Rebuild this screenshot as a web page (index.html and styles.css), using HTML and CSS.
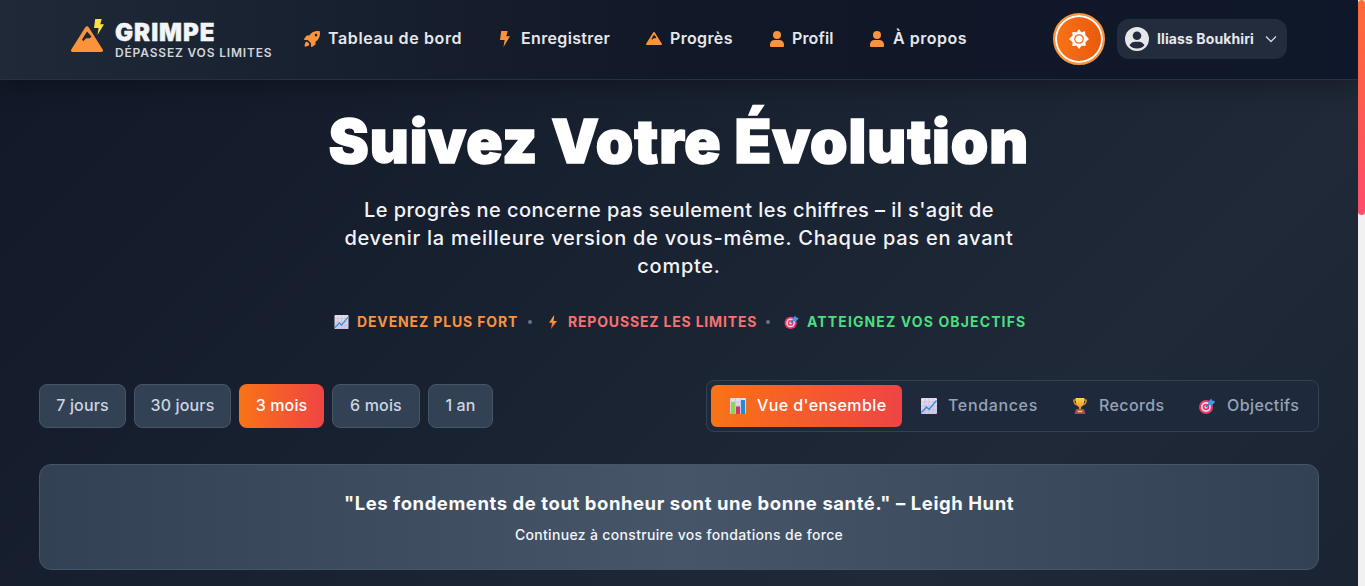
FILE: index.html
```html
<!DOCTYPE html>
<html lang="fr">
<head>
<meta charset="utf-8">
<title>Grimpe – Progrès</title>
<link rel="stylesheet" href="styles.css">
</head>
<body>
<svg class="defs" aria-hidden="true">
  <linearGradient id="gold" x2="0" y2="1"><stop offset="0" stop-color="#ffd34d"/><stop offset="1" stop-color="#f28a1c"/></linearGradient>
  <linearGradient id="flash" x2="0" y2="1"><stop offset="0" stop-color="#ffc93c"/><stop offset="1" stop-color="#f4502e"/></linearGradient>
  <linearGradient id="paper" x2="0" y2="1"><stop offset="0" stop-color="#e6e0ee"/><stop offset="1" stop-color="#d3c5e3"/></linearGradient>
  <symbol id="mountain" viewBox="0 0 32 26"><path fill-rule="evenodd" d="M14.3 1.2a2 2 0 0 1 3.4 0L31.700 23.500a1.600 1.600 0 0 1-1.400 2.500H1.700a1.600 1.600 0 0 1-1.400-2.500ZM16 5.500l-5 8 1.200 1.800 3-3h3.600l1.700-1.800Z"/></symbol>
  <symbol id="bolt" viewBox="0 0 10 16"><path d="M1.200 0h6.500L6.300 5.200H10L3.500 16 4.600 9H0Z"/></symbol>
  <symbol id="person" viewBox="0 0 14 16"><circle cx="7" cy="4" r="4"/><path d="M0 13.500A4.500 4.500 0 0 1 4.500 9h5a4.500 4.500 0 0 1 4.500 4.500V15a1 1 0 0 1-1 1H1a1 1 0 0 1-1-1Z"/></symbol>
  <symbol id="chart" viewBox="0 0 16 16"><rect width="16" height="16" rx="1" fill="url(#paper)"/><path d="M4 0v16M8 0v16M12 0v16M0 4h16M0 8h16M0 12h16" stroke="#bfb3d0" stroke-width=".5"/><path d="m.5 14.500 5-5.500 2.500 2.500L15.500 2.500" fill="none" stroke="#2f8ddb" stroke-width="1.400"/></symbol>
  <symbol id="bars" viewBox="0 0 16 16"><rect width="16" height="16" rx="1" fill="url(#paper)"/><path d="M5.500 0v16M11 0v16M0 4h16M0 8h16" stroke="#bfb3d0" stroke-width=".5"/><path fill="#8bd650" d="M1 4h4v12H1z"/><path fill="#d92d78" d="M6 8.500h4V16H6z"/><path fill="#2589dc" d="M11 2h4v14h-4z"/></symbol>
  <symbol id="target" viewBox="0 0 16 16"><circle cx="7" cy="9" r="7" fill="#e83a6c"/><circle cx="7" cy="9" r="4.900" fill="#eadcf0"/><circle cx="7" cy="9" r="3.300" fill="#e83a6c"/><circle cx="7" cy="9" r="1.500" fill="#eadcf0"/><path d="m7 9 5-5" stroke="#2076c7" stroke-width="1.300"/><path fill="#3b9cec" d="m9 4.500 3.200-4L13 2.500l2.500.500.500 1.300-3.500 3.200-2.500-.500Z"/></symbol>
  <symbol id="trophy" viewBox="0 0 16 16"><path d="M4 2H1.800C1.800 5.500 3 6.500 5.500 7M12 2h2.200c0 3.500-1.200 4.500-3.700 5" fill="none" stroke="#f5a52a" stroke-width="1.200"/><path fill="url(#gold)" d="M3.500 0h9C12.500 5 11.500 8 9 9v2.500H7V9C4.500 8 3.500 5 3.500 0Z"/><path fill="#9a4d5b" d="M4 11h8l1.500 5h-11Z"/><path fill="#f8bd3d" d="M5.500 12.500h5v1.800h-5z"/></symbol>
</svg>
<div class="window">
  <div class="page">
    <header class="header">
      <a class="brand">
        <span class="logo">
          <svg class="logo-peak"><use href="#mountain"/></svg>
          <svg class="logo-bolt"><use href="#bolt"/></svg>
        </span>
        <span class="brand-text"><b class="brand-name">GRIMPE</b><span class="brand-tag">DÉPASSEZ VOS LIMITES</span></span>
      </a>
      <nav class="nav">
        <a class="nav-item nav-dash"><svg class="ico16" viewBox="0 0 16 16"><path fill-rule="evenodd" d="M15.800.6C16.500 5 15 8.400 11.500 10.800v2.700L8 16c-.5.100-1-.100-1-.7v-3.100L3.800 9H.7c-.6 0-.8-.5-.6-1L2.600 4.600h2.600C7.600 1 11-.5 15.300.1ZM12 2.800a1.300 1.300 0 1 0 0 2.600 1.300 1.300 0 0 0 0-2.600Z"/><path d="M3 10.500c-1.800.2-2.400 2.700-2.500 4.900 2.500 0 4.900-.5 5-2.500Z"/></svg><span>Tableau de bord</span></a>
        <a class="nav-item nav-save"><svg class="ico-bolt"><use href="#bolt"/></svg><span>Enregistrer</span></a>
        <a class="nav-item nav-progress"><svg class="ico-peak"><use href="#mountain"/></svg><span>Progrès</span></a>
        <a class="nav-item nav-profile"><svg class="ico-person"><use href="#person"/></svg><span>Profil</span></a>
        <a class="nav-item nav-about"><svg class="ico-person"><use href="#person"/></svg><span>À propos</span></a>
      </nav>
      <button class="theme"><svg width="20" height="20" viewBox="0 0 20 20"><path fill="#fff" d="m10 0 2.200 3.200L16 2.200l.4 4L20 10l-3.600 3.200.3 3.500-4.200.1L10 20l-2.300-3.200-4.400.1.300-3.700L0 10l3.600-3.400-.3-3.700 4.400.3Z"/><circle cx="10" cy="10" r="4.200" fill="#fff" stroke="#f26a14" stroke-width="1.200"/></svg></button>
      <button class="user"><svg width="24" height="24" viewBox="0 0 24 24"><circle cx="12" cy="12" r="12" fill="#e5e7eb"/><circle cx="12" cy="8.700" r="4.300" fill="#232c3c"/><path fill="#232c3c" d="M4.500 18.300C6 15.800 8 14.800 10 14.800h4c2 0 4 1 5.500 3.500A10 10 0 0 1 12 21.500a10 10 0 0 1-7.500-3.200Z"/></svg><span class="user-name">Iliass Boukhiri</span><svg width="12" height="12" viewBox="0 0 12 12"><path d="m1 3.500 5 5 5-5" fill="none" stroke="#d1d5db" stroke-width="1.300"/></svg></button>
    </header>
    <main class="main">
      <h1 class="title">Suivez Votre Évolution</h1>
      <p class="lead"><span class="l1">Le progrès ne concerne pas seulement les chiffres – il s'agit de</span><br><span class="l2">devenir la meilleure version de vous-même. Chaque pas en avant</span><br><span class="l2">compte.</span></p>
      <div class="mottos">
        <svg class="ico14"><use href="#chart"/></svg><b class="motto orange">DEVENEZ PLUS FORT</b><i class="dot"></i>
        <svg class="ico14 flash" viewBox="0 0 14 14"><path fill="url(#flash)" d="M8.200 0 3 7.700h3L5 14l6-8H7.600Z"/></svg><b class="motto red">REPOUSSEZ LES LIMITES</b><i class="dot"></i>
        <svg class="ico14"><use href="#target"/></svg><b class="motto green">ATTEIGNEZ VOS OBJECTIFS</b>
      </div>
      <div class="controls">
        <div class="ranges">
          <button class="range r7"><span>7 jours</span></button><button class="range r30"><span>30 jours</span></button><button class="range r3 on"><span>3 mois</span></button><button class="range r6"><span>6 mois</span></button><button class="range r1"><span>1 an</span></button>
        </div>
        <div class="tabs">
          <button class="tab t1 on"><svg class="ico16"><use href="#bars"/></svg><span>Vue d'ensemble</span></button>
          <button class="tab t2"><svg class="ico16"><use href="#chart"/></svg><span>Tendances</span></button>
          <button class="tab t3"><svg class="ico16"><use href="#trophy"/></svg><span>Records</span></button>
          <button class="tab t4"><svg class="ico16"><use href="#target"/></svg><span>Objectifs</span></button>
        </div>
      </div>
      <section class="quote">
        <p class="quote-text">"Les fondements de tout bonheur sont une bonne santé." – Leigh Hunt</p>
        <p class="quote-sub">Continuez à construire vos fondations de force</p>
      </section>
    </main>
  </div>
  <div class="scrollbar"><div class="thumb"></div></div>
</div>
</body>
</html>
```
FILE: styles.css
```css
* { box-sizing: border-box; }
body { margin: 0; font-family: Inter, "Open Sans", sans-serif; overflow: hidden; background: #111827; }
button { font: inherit; border: 0; padding: 0; color: inherit; }
svg { flex: none; display: block; }
.defs { position: absolute; width: 0; height: 0; }
.window { display: flex; height: 586px; overflow: hidden; }
.page { width: 1358px; height: 1600px; background: linear-gradient(135deg, #111827, #1f2937 50%, #111827); }
.scrollbar { width: 7px; background: #f1f1f1; }
.thumb { height: 215px; border-radius: 4px; background: linear-gradient(#ff6b35, #ff4c6c); }

.header { height: 80px; display: flex; align-items: center; padding: 0 71px 2px; border-bottom: 1px solid #273142; background: linear-gradient(90deg, #1f2937, #111827 50%, #0f172a); box-shadow: 0 8px 20px rgba(0, 0, 0, .25); white-space: nowrap; }
.brand { display: flex; width: 233px; height: 38px; padding-top: 1px; }
.logo { position: relative; width: 44px; }
.logo-peak { width: 32px; height: 26px; margin-top: 5px; fill: #fb923c; }
.logo-bolt { position: absolute; left: 23px; top: -2px; width: 10px; height: 16px; fill: #fde047; }
.brand-text { display: flex; flex-direction: column; }
.brand-name { font-size: 24px; font-weight: 900; line-height: 24px; color: #f3f4f6; letter-spacing: 1px; -webkit-text-stroke: .4px #f3f4f6; }
.brand-tag { font-size: 12px; font-weight: 600; line-height: 16px; color: #d1d5db; letter-spacing: .83px; }
.nav { display: flex; width: 749px; }
.nav-item { display: flex; align-items: center; gap: 8px; font-size: 16px; line-height: 24px; font-weight: 600; color: #e5e7eb; letter-spacing: .35px; }
.nav-item span { padding-bottom: 1px; }
.nav-item svg { fill: #fb923c; }
.nav-dash { width: 196px; letter-spacing: .64px; }
.nav-save { width: 146px; }
.nav-progress { width: 124px; }
.nav-profile { width: 100px; letter-spacing: .15px; }
.nav-about { gap: 9px; letter-spacing: .5px; }
.ico16 { width: 16px; height: 16px; }
.ico-bolt { width: 10px; height: 16px; margin-right: 3px; }
.ico-peak { width: 16px; height: 13px; }
.ico-person { width: 14px; height: 16px; }
.theme { width: 52px; height: 52px; border-radius: 50%; border: 2px solid #fb923c; box-shadow: inset 0 0 0 2px #fff; background: linear-gradient(90deg, #f97316, #ea580c); display: flex; align-items: center; justify-content: center; margin-right: 12px; }
.user { width: 170px; height: 40px; padding: 0 8px; border-radius: 12px; display: flex; align-items: center; background: #232c3c; color: #e5e7eb; }
.user-name { width: 108px; margin-left: 8px; text-align: left; font-size: 14px; font-weight: 700; letter-spacing: .1px; }

.main { padding: 23px 39px 0; text-align: center; }
.title { margin: 0; font-size: 60px; line-height: 76px; font-weight: 900; color: #fff; white-space: nowrap; letter-spacing: .95px; -webkit-text-stroke: 1.6px #fff; }
.lead { margin: 17px 0 0; font-size: 20px; line-height: 28px; font-weight: 500; color: #f3f4f6; }
.l1 { letter-spacing: .44px; }
.l2 { letter-spacing: .74px; }
.mottos { display: flex; height: 20px; align-items: center; margin: 32px 0 0 295px; text-align: left; white-space: nowrap; }
.ico14 { width: 15px; height: 14px; margin-right: 8px; }
.flash { width: 14px; }
.motto { font-size: 14px; line-height: 20px; }
.orange { width: 171px; color: #fb923c; letter-spacing: .86px; }
.red { width: 198px; color: #f87171; letter-spacing: .82px; }
.green { color: #4ade80; letter-spacing: 1.12px; }
.dot { width: 4px; height: 4px; border-radius: 50%; background: #64748b; margin-right: 14px; }
.controls { display: flex; justify-content: space-between; align-items: center; margin-top: 48px; height: 52px; }
.ranges { display: flex; gap: 8px; }
.range { height: 44px; padding-bottom: 2px; border: 1px solid #475569; border-radius: 8px; background: #334155; color: #cbd5e1; font-size: 16px; font-weight: 500; letter-spacing: .15px; white-space: nowrap; }
.r7 { width: 87px; } .r30 { width: 97px; } .r3 { width: 85px; } .r6 { width: 88px; } .r1 { width: 65px; }
.range.on, .tab.on { border: 0; color: #fff; background: linear-gradient(90deg, #f97316, #ef4444); }
.tabs { width: 613px; height: 52px; padding: 4px; display: flex; border: 1px solid #334155; border-radius: 8px; background: #1e293b; }
.tab { height: 42px; display: flex; align-items: center; gap: 11px; padding-left: 19px; border-radius: 6px; background: none; color: #94a3b8; font-size: 16px; font-weight: 500; letter-spacing: .4px; white-space: nowrap; }
.tab span { padding-bottom: 2px; }
.tab svg { margin-bottom: 1px; }
.t1 { width: 191px; } .t2 { width: 151px; letter-spacing: .65px; } .t3 { width: 127px; } .t4 { gap: 12px; }
.quote { margin-top: 32px; height: 106px; padding-top: 24px; border: 1px solid #475569; border-radius: 12px; background: linear-gradient(90deg, #334155, #475569 50%, #334155); color: #fff; }
.quote p { margin: 0; }
.quote-text { font-size: 18.5px; line-height: 28px; font-weight: 700; color: #f8fafc; letter-spacing: .56px; }
.quote-sub { padding-top: 8px; font-size: 14px; line-height: 20px; font-weight: 500; color: #f1f5f9; letter-spacing: .33px; }
```
